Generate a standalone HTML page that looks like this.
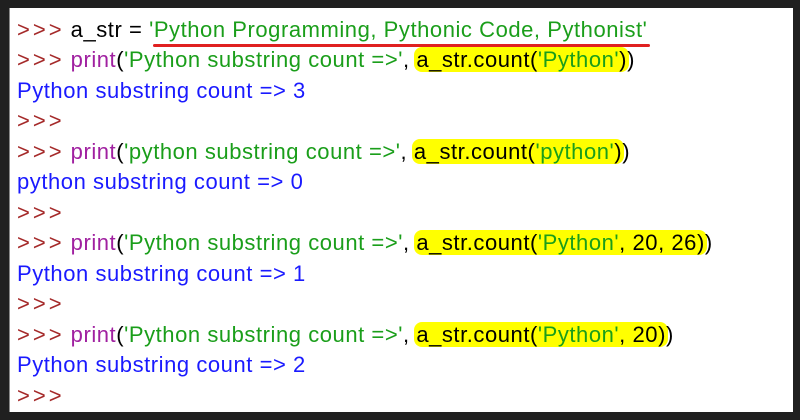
<!DOCTYPE html>
<html><head><style>
html,body{margin:0;padding:0;background:#202020;width:800px;height:420px;overflow:hidden}
.w{position:absolute;left:9px;top:8px;width:783px;height:404px;background:#fff;border-left:1px solid #888}
.l{position:absolute;left:7px;font-family:"Liberation Sans","Noto Sans CJK KR",sans-serif;font-size:22px;letter-spacing:0.55px;white-space:pre;line-height:30px;color:#000}
.p{color:#a52a2a;letter-spacing:3px}.g{color:#1a9e1a}.b{color:#1a1aff}.m{color:#a020a0}
.h{background:#ffff00;border-radius:8px;padding:0 2px;margin:0 -2px}
.u{position:absolute;left:143px;top:36px;width:497px;height:3px;background:#e02020;border-radius:2px}
.s{letter-spacing:0}
</style></head><body><div class="w">
<div class="l" style="top:7px"><span class="p">&gt;&gt;&gt;</span><span class="s"> </span>a_str = <span class="g">'Python Programming, Pythonic Code, Pythonist'</span></div>
<div class="u"></div>
<div class="l" style="top:37px"><span class="p">&gt;&gt;&gt;</span><span class="s"> </span><span class="m">print</span>(<span class="g">'Python substring count =&gt;'</span>, <span class="h">a_str.count(<span class="g">'Python'</span>)</span>)</div>
<div class="l b" style="top:68px">Python substring count =&gt; 3</div>
<div class="l p" style="top:98px">&gt;&gt;&gt;</div>
<div class="l" style="top:129px"><span class="p">&gt;&gt;&gt;</span><span class="s"> </span><span class="m">print</span>(<span class="g">'python substring count =&gt;'</span>, <span class="h">a_str.count(<span class="g">'python'</span>)</span>)</div>
<div class="l b" style="top:159px">python substring count =&gt; 0</div>
<div class="l p" style="top:190px">&gt;&gt;&gt;</div>
<div class="l" style="top:220px"><span class="p">&gt;&gt;&gt;</span><span class="s"> </span><span class="m">print</span>(<span class="g">'Python substring count =&gt;'</span>, <span class="h">a_str.count(<span class="g">'Python'</span>, 20, 26)</span>)</div>
<div class="l b" style="top:251px">Python substring count =&gt; 1</div>
<div class="l p" style="top:281px">&gt;&gt;&gt;</div>
<div class="l" style="top:312px"><span class="p">&gt;&gt;&gt;</span><span class="s"> </span><span class="m">print</span>(<span class="g">'Python substring count =&gt;'</span>, <span class="h">a_str.count(<span class="g">'Python'</span>, 20)</span>)</div>
<div class="l b" style="top:342px">Python substring count =&gt; 2</div>
<div class="l p" style="top:373px">&gt;&gt;&gt;</div>
</div></body></html>
